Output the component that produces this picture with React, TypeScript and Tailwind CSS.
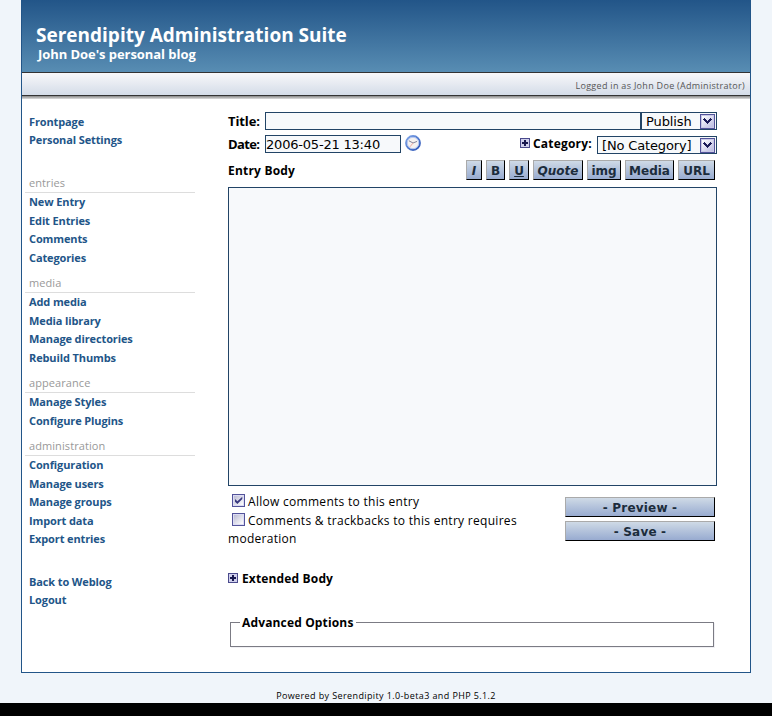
import React from "react";

const treb = "font-['Open_Sans','Noto_Sans',sans-serif]";
const verd = "font-['DejaVu_Sans',sans-serif]";

function Plus() {
  return (
    <svg width="10" height="10" viewBox="0 0 10 10" shapeRendering="crispEdges" className="block shrink-0">
      <rect width="10" height="10" fill="#4a4a8c" />
      <rect x="1" y="1" width="8" height="8" fill="#d0d0ec" />
      <path d="M4 2h2v6h-2zM2 4h6v2h-6z" fill="#18184e" />
    </svg>
  );
}

function Arrow() {
  return (
    <svg width="15" height="15" viewBox="0 0 15 15" shapeRendering="crispEdges" className="mt-px mr-px block shrink-0">
      <defs>
        <linearGradient id="arrowFill" x1="0" y1="0" x2="1" y2="1">
          <stop offset="0" stopColor="#ffffff" />
          <stop offset="1" stopColor="#bcbce2" />
        </linearGradient>
      </defs>
      <rect x="0" y="0" width="15" height="15" fill="#53539a" />
      <rect x="1" y="1" width="13" height="13" fill="#c9c9e6" />
      <rect x="2" y="2" width="11" height="11" fill="url(#arrowFill)" />
      <path d="M4 4h1v1h1v1h1v1h1v-1h1v-1h1v-1h1v1h1v1h-1v1h-1v1h-1v1h-1v1h-1v-1h-1v-1h-1v-1h-1v-1h-1v-1h1z" fill="#1c1c58" />
    </svg>
  );
}

function Check({ on }: { on?: boolean }) {
  return (
    <svg width="13" height="13" viewBox="0 0 13 13" className="block shrink-0">
      <defs>
        <linearGradient id="checkFill" x1="0" y1="0" x2="1" y2="1">
          <stop offset="0" stopColor="#bcbcd4" />
          <stop offset="1" stopColor="#ffffff" />
        </linearGradient>
      </defs>
      <rect x=".5" y=".5" width="12" height="12" fill="#dcdcf4" stroke="#53539a" />
      <rect x="2" y="2" width="9" height="9" fill="url(#checkFill)" />
      {on && <path d="M3 5v2.8l2.4 2.3 4.9-5V2.7L5.4 7.3z" fill="#383880" />}
    </svg>
  );
}

function Clock() {
  return (
    <svg width="16" height="16" viewBox="0 0 16 16" className="block">
      <defs>
        <linearGradient id="clockRim" x1="0" y1="0" x2="1" y2="1">
          <stop offset="0" stopColor="#7fa6ea" />
          <stop offset="1" stopColor="#2a52b4" />
        </linearGradient>
      </defs>
      <circle cx="8" cy="8" r="7" fill="#f5f2f0" stroke="url(#clockRim)" strokeWidth="1.8" />
      <circle cx="8" cy="8" r="5.7" fill="none" stroke="#b4c6f0" strokeWidth="1" />
      <path d="M4 5.8l4 2.2 4-1.6" fill="none" stroke="#85859a" />
      <path d="M8 8l-3 3.8" stroke="#efaaa2" />
    </svg>
  );
}

function Group({ title, items, size }: { title: string; items: string[]; size: string }) {
  return (
    <section>
      <h2 className="ml-px w-[170px] h-[19px] border-b border-[#ddd] pl-1 text-[11px] leading-[17px] tracking-[0.08px] text-[#999] font-normal">{title}</h2>
      <Links items={items} size={size} row="h-[18.6px]" />
    </section>
  );
}

function Links({ items, size, row }: { items: string[]; size: string; row: string }) {
  return (
    <ul className={size}>
      {items.map((t) => (
        <li key={t} className={`${row} pl-[5px] text-[11px] font-bold leading-[17px] tracking-[-0.12px] text-[#225588]`}>{t}</li>
      ))}
    </ul>
  );
}

const tool = "h-5 border border-t-[#aaa] border-l-[#aaa] border-r-black border-b-black bg-linear-to-b from-[#cfdae6] to-[#98abd0] text-center text-[12px] leading-[20px] font-bold text-[#1c2c3c]";

export default function App() {
  return (
    <div className={`h-[716px] w-[772px] overflow-hidden bg-black whitespace-nowrap text-black ${treb}`}>
      <div className="h-[703px] bg-[#f0f5fa]">
        <div className="ml-[21px] h-[673px] w-[730px] border border-t-0 border-[#225588] bg-white">
          <header className="h-[73px] border-b border-[#333] bg-linear-to-b from-[#225588] to-[#588db3] pl-[14px] pt-[23px] font-bold text-white">
            <h1 className="h-[24px] text-[19px] leading-[24px]">Serendipity Administration Suite</h1>
            <p className="pl-[2px] text-[13px] leading-[15px] tracking-[-0.06px]">John Doe's personal blog</p>
          </header>
          <div className="h-[23px] border-b border-[#333] bg-linear-to-b from-[#f8f8fa] to-[#d4dce8] pr-[5px] text-right text-[9px] leading-[26px] tracking-[0.3px] text-[#555]">Logged in as John Doe (Administrator)</div>
          <div className="h-[3px] bg-linear-to-b from-[#888] to-[#ddd]" />
          <div className="flex">
            <nav className="w-[206px] pl-[2px] pt-[14px]">
              <Links items={["Frontpage", "Personal Settings"]} size="h-[61px]" row="h-[18.4px]" />
              <Group size="h-[81px]" title="entries" items={["New Entry", "Edit Entries", "Comments", "Categories"]} />
              <Group size="h-[81px]" title="media" items={["Add media", "Media library", "Manage directories", "Rebuild Thumbs"]} />
              <Group size="h-[44px]" title="appearance" items={["Manage Styles", "Configure Plugins"]} />
              <Group size="h-[117px]" title="administration" items={["Configuration", "Manage users", "Manage groups", "Import data", "Export entries"]} />
              <Links items={["Back to Weblog", "Logout"]} size="h-[38px]" row="h-[18.4px]" />
            </nav>
            <main className="w-[489px] pt-[13px]">
              <div className="flex h-[18px] text-[13px]">
                <b className="w-[37px] leading-[18px] tracking-[-0.1px]">Title:</b>
                <div className="h-[18px] w-[376px] border border-[#224466] bg-[#f7f9fb]" />
                <div className={`flex h-[18px] w-[76px] justify-between border border-[#224466] bg-[#f7f9fb] pl-[4px] leading-[17px] tracking-[-0.1px] ${verd}`}>
                  <span>Publish</span><Arrow />
                </div>
              </div>
              <div className="mt-[5px] flex h-[19px] text-[13px]">
                <b className="w-[37px] leading-[18px] tracking-[-0.65px]">Date:</b>
                <div className={`h-[18px] w-[136px] border border-[#224466] bg-[#f7f9fb] leading-[18px] tracking-[-0.2px] ${verd}`}>2006-05-21 13:40</div>
                <div className="ml-1"><Clock /></div>
                <div className="ml-auto mt-[3px]"><Plus /></div>
                <b className="ml-[3px] w-[64px] text-[12px] leading-[17px] tracking-[0.2px]">Category:</b>
                <div className={`mt-px flex h-[18px] w-[120px] justify-between border border-[#224466] bg-[#f7f9fb] pl-[4px] leading-[18px] tracking-[-0.15px] ${verd}`}>
                  <span>[No Category]</span><Arrow />
                </div>
              </div>
              <div className={`mt-[6px] flex h-5 gap-[4px] pr-[2px] ${verd}`}>
                <b className={`mr-auto text-[12px] leading-[22px] tracking-[0.2px] ${treb}`}>Entry Body</b>
                <div className={`${tool} w-4 italic`}>I</div>
                <div className={`${tool} w-[19px]`}>B</div>
                <div className={`${tool} w-5 underline`}>U</div>
                <div className={`${tool} w-[50px] italic`}>Quote</div>
                <div className={`${tool} w-[34px]`}>img</div>
                <div className={`${tool} w-[49px]`}>Media</div>
                <div className={`${tool} w-[37px]`}>URL</div>
              </div>
              <div className="mt-[7px] h-[299px] border border-[#224466] bg-[#f7f9fb]" />
              <div className="flex h-[63px] justify-between pr-[2px] pt-[8px] text-[12px] leading-[19px]">
                <div className="tracking-[0.29px]">
                  <div className="flex h-[19px] gap-[3px] pl-1"><Check on /><span className="-mt-[2px]">Allow comments to this entry</span></div>
                  <div className="flex h-[19px] gap-[3px] pl-1"><Check /><span className="-mt-[2px]">Comments &amp; trackbacks to this entry requires</span></div>
                  <div className="-mt-[3px]">moderation</div>
                </div>
                <div className={`flex flex-col gap-1 pt-[3px] tracking-[0.2px] ${verd}`}>
                  <div className={`${tool} w-[150px]`}>- Preview -</div>
                  <div className={`${tool} w-[150px]`}>- Save -</div>
                </div>
              </div>
              <div className="mt-[19px] flex h-[20px] items-center gap-1 text-[12px] font-bold tracking-[0.15px]"><Plus /><span className="pt-px">Extended Body</span></div>
              <fieldset className="ml-[2px] mt-[26px] h-[33px] w-[484px] border border-[#7b7b84] pl-[9px] shadow-[1px_1px_0_#f0f0f4]">
                <legend className="px-[2px] text-[12px] font-bold leading-[17px] tracking-[0.15px]">Advanced Options</legend>
              </fieldset>
            </main>
          </div>
        </div>
        <footer className="pt-[14px] text-center text-[9px] leading-[18px] tracking-[0.39px]">Powered by Serendipity 1.0-beta3 and PHP 5.1.2</footer>
      </div>
    </div>
  );
}
